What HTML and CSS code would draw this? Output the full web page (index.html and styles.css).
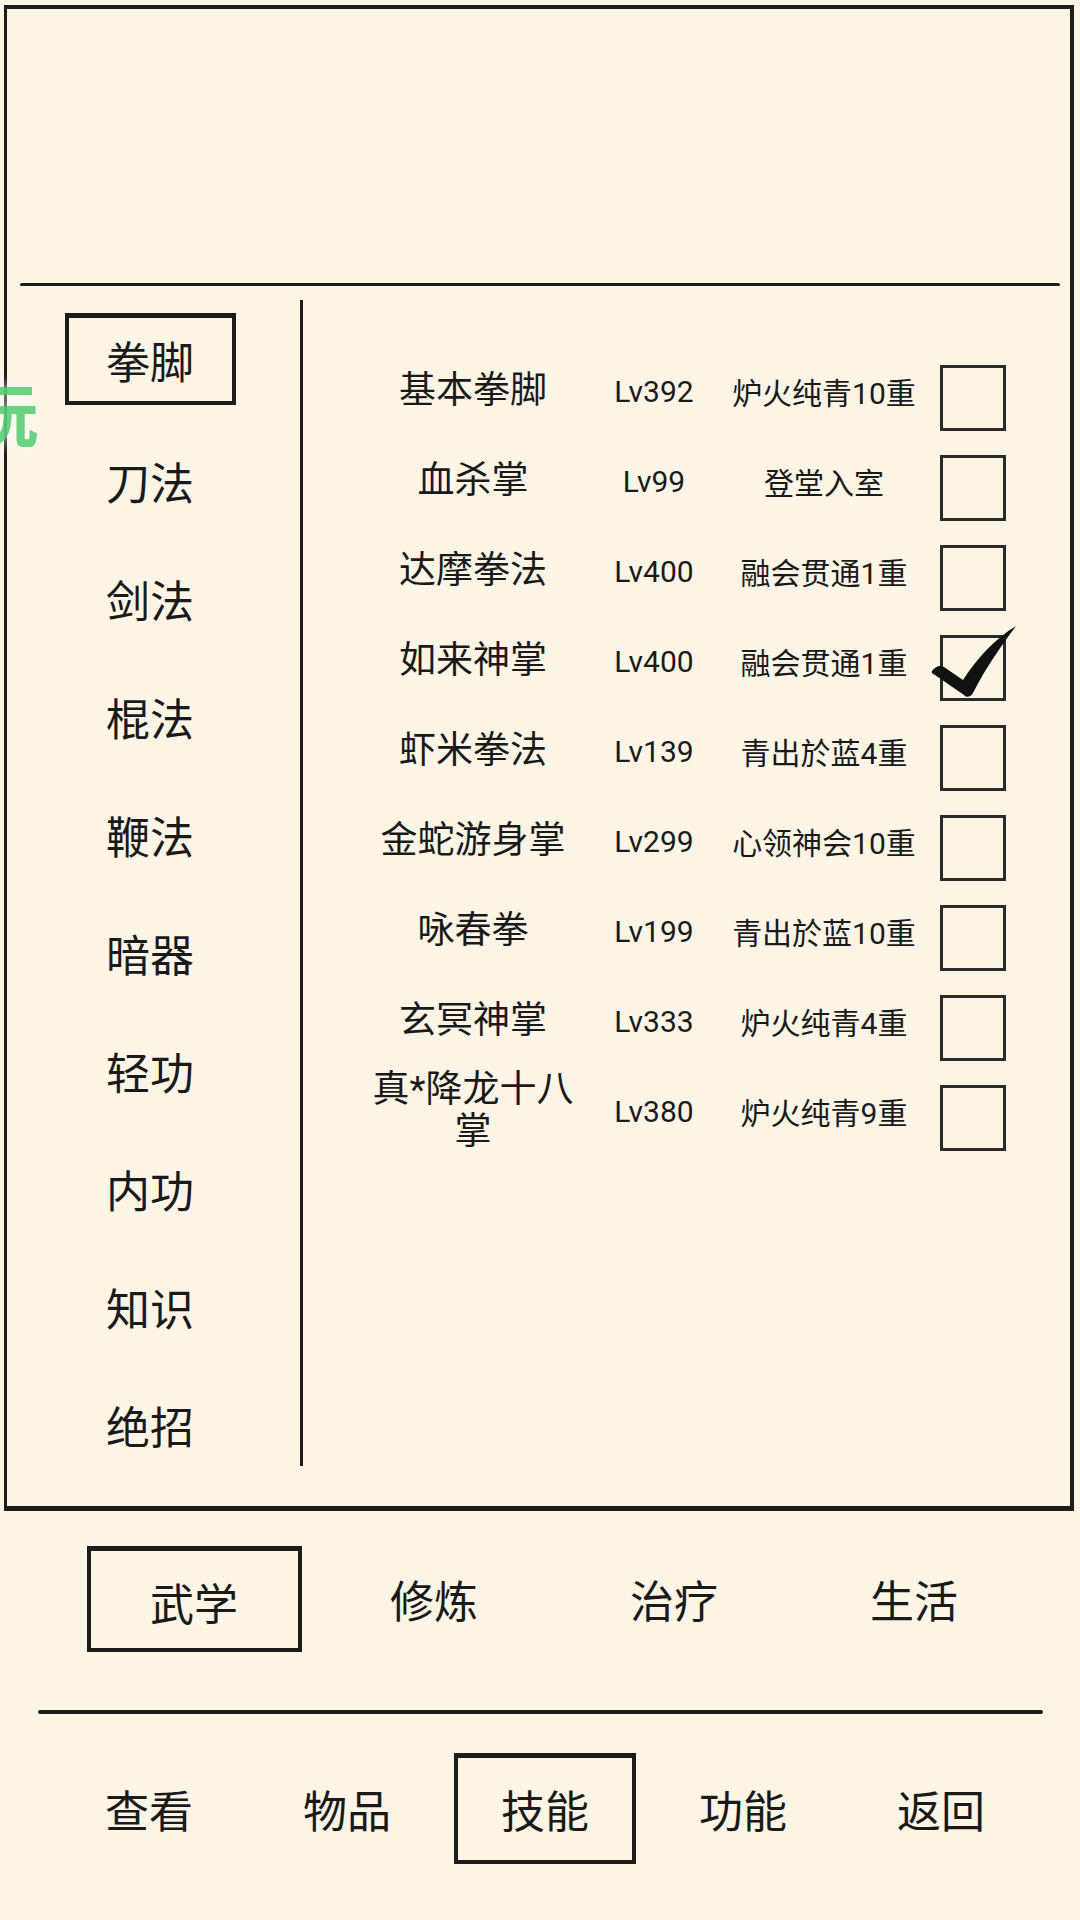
FILE: index.html
```html
<!DOCTYPE html>
<html lang="zh-CN">
<head>
    <meta charset="UTF-8">
    <meta name="viewport" content="width=device-width, initial-scale=1.0">
    <title>技能</title>
    <link rel="stylesheet" href="styles.css">
</head>
<body>
    <div class="frame">
        <div class="info-panel"></div>
        <div class="divider"></div>
        <div class="main">
            <div class="categories">
                <div class="cat active"><span>拳脚</span></div>
                <div class="cat"><span>刀法</span></div>
                <div class="cat"><span>剑法</span></div>
                <div class="cat"><span>棍法</span></div>
                <div class="cat"><span>鞭法</span></div>
                <div class="cat"><span>暗器</span></div>
                <div class="cat"><span>轻功</span></div>
                <div class="cat"><span>内功</span></div>
                <div class="cat"><span>知识</span></div>
                <div class="cat"><span>绝招</span></div>
            </div>
            <div class="vline"></div>
            <div id="skillList" class="skills"></div>
        </div>
    </div>

    <div class="tabs">
        <div class="tab active"><span>武学</span></div>
        <div class="tab"><span>修炼</span></div>
        <div class="tab"><span>治疗</span></div>
        <div class="tab"><span>生活</span></div>
    </div>

    <div class="sep"></div>

    <div class="nav">
        <div class="nav-item"><span>查看</span></div>
        <div class="nav-item"><span>物品</span></div>
        <div class="nav-item active"><span>技能</span></div>
        <div class="nav-item"><span>功能</span></div>
        <div class="nav-item"><span>返回</span></div>
    </div>

    <div class="float-badge">玩</div>

    <script>
        const skills = [
            { name: '基本拳脚', level: 392, stage: '炉火纯青10重' },
            { name: '血杀掌', level: 99, stage: '登堂入室' },
            { name: '达摩拳法', level: 400, stage: '融会贯通1重' },
            { name: '如来神掌', level: 400, stage: '融会贯通1重', equipped: true },
            { name: '虾米拳法', level: 139, stage: '青出於蓝4重' },
            { name: '金蛇游身掌', level: 299, stage: '心领神会10重' },
            { name: '咏春拳', level: 199, stage: '青出於蓝10重' },
            { name: '玄冥神掌', level: 333, stage: '炉火纯青4重' },
            { name: '真*降龙十八掌', level: 380, stage: '炉火纯青9重' }
        ];

        const checkMark = `
            <svg class="tick" viewBox="-12 -12 92 80" width="92" height="80">
                <path d="M -8 36 C -4 31 0 30 4 32 L 23 45 C 38 22 55 4 76 -9 C 62 10 46 32 33 58 C 31 62 26 63 24 60 L -5 40 C -8 39 -9 37 -8 36 Z" fill="#111"/>
            </svg>`;

        const list = document.getElementById('skillList');
        skills.forEach(skill => {
            const row = document.createElement('div');
            row.className = 'skill-row';
            row.innerHTML = `
                <div class="name">${skill.name}</div>
                <div class="level">Lv${skill.level}</div>
                <div class="stage">${skill.stage}</div>
                <div class="check">${skill.equipped ? checkMark : ''}</div>
            `;
            list.appendChild(row);
        });
    </script>
</body>
</html>
```

FILE: styles.css
```css
body {
    margin: 0;
    width: 1080px;
    height: 1920px;
    overflow: hidden;
    position: relative;
    background: #fcf5e5;
    color: #1a1a1a;
    font-family: Roboto, "Noto Sans CJK SC", sans-serif;
}

/* main hand-drawn frame */
.frame {
    margin: 5px 0 0 4px;
    width: 1070px;
    height: 1506px;
    box-sizing: border-box;
    border-style: solid;
    border-color: #1c1c1c;
    border-width: 4px 4px 5px 3px;
    display: flex;
    flex-direction: column;
}

.info-panel {
    height: 274px;
}

.divider {
    height: 3px;
    margin: 0 10px 0 13px;
    background: #1c1c1c;
    border-radius: 2px;
}

.main {
    display: flex;
    flex: 1;
}

.categories {
    width: 286px;
    padding-top: 18px;
    display: flex;
    flex-direction: column;
}

.cat {
    height: 118px;
    display: flex;
    align-items: center;
    justify-content: center;
    font-size: 44px;
}

.cat span {
    width: 171px;
    height: 92px;
    box-sizing: border-box;
    display: flex;
    align-items: center;
    justify-content: center;
}

.cat.active span {
    border: 4px solid #1c1c1c;
    border-top-width: 5px;
    margin-top: -8px;
}

.vline {
    width: 3px;
    height: 1166px;
    margin: 14px 0 0 7px;
    background: #1c1c1c;
}

/* skill rows */
.skills {
    flex: 1;
    padding: 60px 0 0 55px;
}

.skill-row {
    display: grid;
    grid-template-columns: 230px 132px 208px 78px;
    height: 90px;
    align-items: center;
    text-align: center;
}

.name {
    font-size: 37px;
    line-height: 42px;
}

.level,
.stage {
    font-size: 30px;
}

.check {
    justify-self: end;
    align-self: start;
    margin-top: 19px;
    width: 66px;
    height: 66px;
    box-sizing: border-box;
    border: 3px solid #2a2a2a;
    position: relative;
}

.tick {
    position: absolute;
    left: -15px;
    top: -15px;
}

/* bottom tabs */
.tabs {
    display: grid;
    grid-template-columns: repeat(4, 240px);
    height: 106px;
    margin: 35px 0 0 74px;
}

.tab,
.nav-item {
    display: flex;
    align-items: center;
    justify-content: center;
    font-size: 44px;
}

.tab span,
.nav-item span {
    display: flex;
    align-items: center;
    justify-content: center;
    box-sizing: border-box;
}

.tab.active span {
    width: 215px;
    height: 106px;
    border: 4px solid #1c1c1c;
    border-top-width: 5px;
    padding-top: 4px;
}

.sep {
    width: 1005px;
    height: 4px;
    margin: 58px 0 0 38px;
    background: #1c1c1c;
    border-radius: 2px;
}

.nav {
    display: grid;
    grid-template-columns: repeat(5, 198px);
    height: 111px;
    margin: 39px 0 0 50px;
}

.nav-item.active span {
    width: 182px;
    height: 111px;
    border: 4px solid #1c1c1c;
    border-top-width: 5px;
    padding-top: 0;
}

/* floating widget at the screen edge */
.float-badge {
    position: absolute;
    left: -31px;
    top: 383px;
    font-size: 69px;
    font-weight: 700;
    line-height: 1;
    color: #5ccf78;
    opacity: 0.9;
    text-shadow: 0 0 14px #fff;
}
```
